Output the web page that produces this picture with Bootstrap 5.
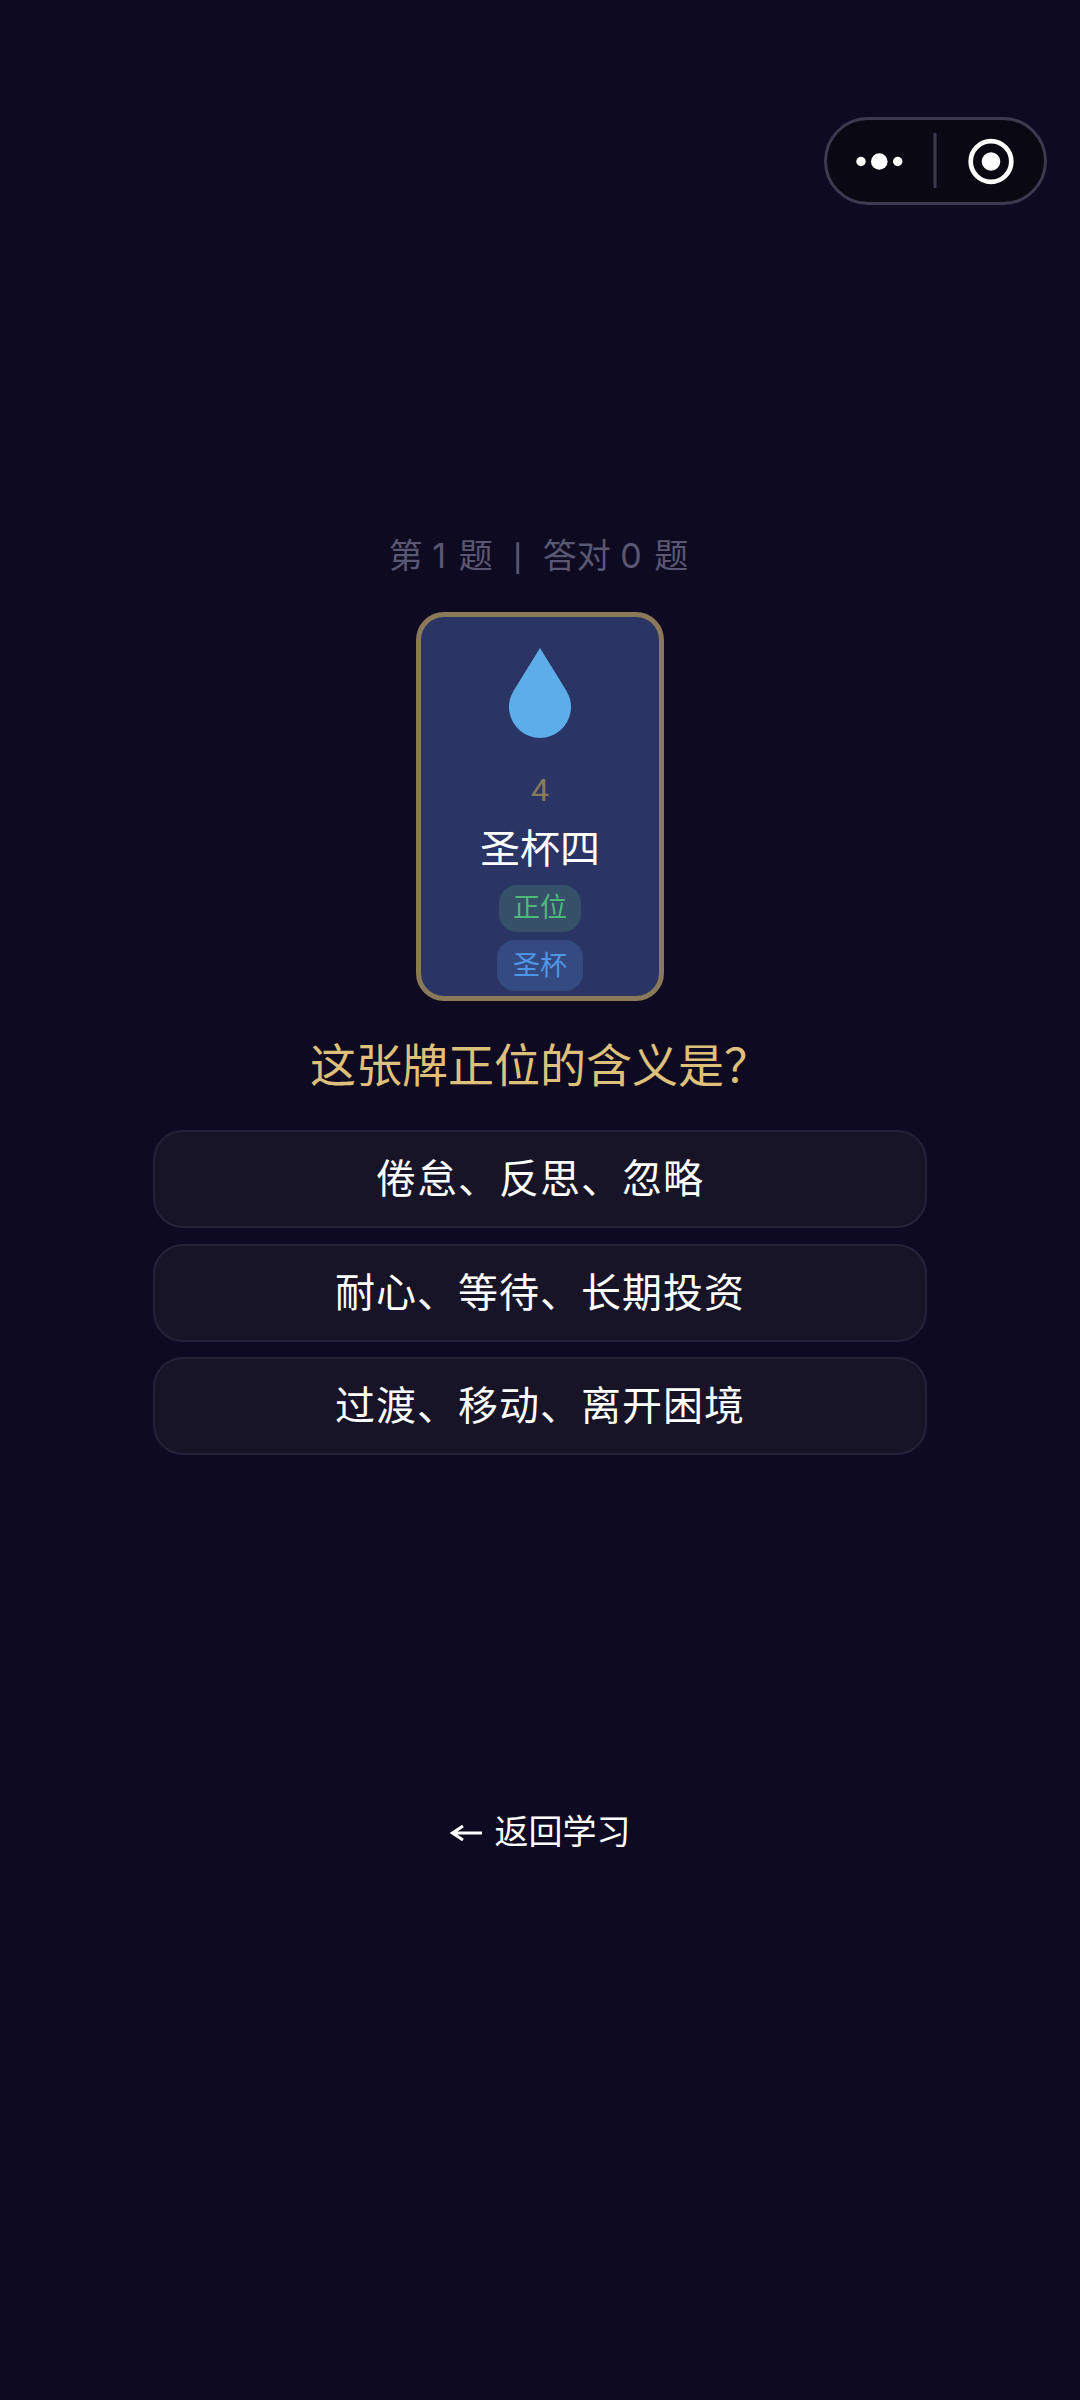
<!doctype html>
<html lang="zh-CN">
<head>
<meta charset="utf-8">
<title>测验</title>
<link href="https://cdn.jsdelivr.net/npm/bootstrap@5.3.0/dist/css/bootstrap.min.css" rel="stylesheet">
<style>
html,body{margin:0;background:#0e0a22;}
body{font-family:Inter,"Noto Sans CJK SC",sans-serif;width:1080px;height:2400px;overflow:hidden;}
.quiz-page{height:2400px;padding-top:532px;position:relative;}
.capsule{position:absolute;left:824px;top:117px;width:223px;height:88px;border:3px solid #3c3a4e;border-radius:44px;background:#0a0812;}
.capsule svg{display:block;}
.progress-line{font-size:34px;line-height:48px;height:48px;color:#5a5773;margin-bottom:32px;white-space:pre;padding-right:3px;}
.sep-bar{display:inline-block;width:31px;text-align:center;font-family:"Noto Sans CJK SC",sans-serif;font-size:28px;line-height:28px;font-weight:700;vertical-align:2px;}
.wide-digit{letter-spacing:3px;}
.tarot{width:248px;height:389px;border:5px solid #8a7a5a;border-radius:28px;background:#2a3465;padding-top:31px;}
.card-num{font-family:Roboto,sans-serif;font-size:32px;line-height:36px;color:#8a7a5a;margin-top:34px;}
.card-name{font-size:40px;line-height:58px;color:#fff;margin-top:12px;}
.chip{font-size:27px;line-height:40px;border-radius:18px;}
.chip-up{background:#36506a;color:#4cbb78;width:82px;height:47px;padding-top:3px;margin-top:7px;}
.chip-suit{background:#354a80;color:#4f96e6;width:86px;height:51px;padding-top:6px;margin-top:8px;}
.question{font-size:46px;line-height:64px;color:#dfc07a;margin-top:32px;margin-bottom:33px;}
.opts{width:774px;gap:15.5px;}
.opt{height:98px;border:2px solid #252238;border-radius:30px;background:#181428;color:#fff;font-size:40px;letter-spacing:1px;line-height:94px;}
.back-link{font-size:34px;line-height:48px;color:#fff;margin-top:353px;}
.back-link svg{vertical-align:2px;margin-right:13px;}
</style>
</head>
<body>
<main class="quiz-page d-flex flex-column align-items-center text-center">
  <div class="capsule d-flex align-items-center">
    <svg width="217" height="82" viewBox="0 0 217 82">
      <circle cx="34" cy="41.5" r="4.7" fill="#fff"/><circle cx="52.3" cy="41.5" r="8.3" fill="#fff"/><circle cx="70.7" cy="41.5" r="4.7" fill="#fff"/>
      <rect x="106.5" y="13" width="3" height="55" fill="#3c3a4e"/>
      <circle cx="164" cy="41.5" r="20.3" fill="none" stroke="#fff" stroke-width="4.7"/><circle cx="164" cy="41.5" r="9.3" fill="#fff"/>
    </svg>
  </div>
  <div class="progress-line">第 <span class="wide-digit">1</span> 题 <span class="sep-bar">|</span> 答对 <span class="wide-digit">0</span> 题</div>
  <div class="tarot d-flex flex-column align-items-center">
    <svg width="62" height="90" viewBox="0 0 62 90"><path d="M31 0 57.4 42.7A31 31 0 1 1 4.6 42.7Z" fill="#5dade8"/></svg>
    <div class="card-num">4</div>
    <div class="card-name">圣杯四</div>
    <div class="chip chip-up">正位</div>
    <div class="chip chip-suit">圣杯</div>
  </div>
  <div class="question">这张牌正位的含义是？</div>
  <div class="opts d-flex flex-column">
    <div class="opt">倦怠、反思、忽略</div>
    <div class="opt">耐心、等待、长期投资</div>
    <div class="opt">过渡、移动、离开困境</div>
  </div>
  <div class="back-link"><svg width="32" height="18" viewBox="0 0 32 18"><path d="M32 9H2.5M13 2 2.5 9 13 16" fill="none" stroke="#fff" stroke-width="3"/></svg>返回学习</div>
</main>
<script src="https://cdn.jsdelivr.net/npm/bootstrap@5.3.0/dist/js/bootstrap.bundle.min.js"></script>
</body>
</html>
